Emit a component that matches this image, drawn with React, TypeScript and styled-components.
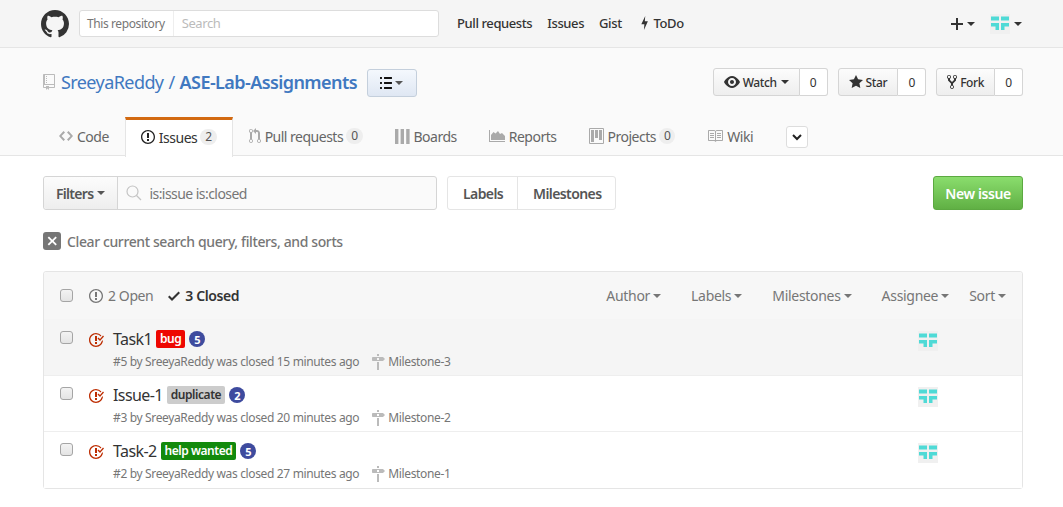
import styled, { createGlobalStyle } from 'styled-components'
import { ReactNode } from 'react'

const GlobalStyle = createGlobalStyle`
    html, body {
        margin: 0;
        padding: 0;
        background: #fff;
        font-family: "Noto Sans", "Open Sans", sans-serif;
        font-size: 14px;
        letter-spacing: -0.4px;
        color: #333;
    }
    * { box-sizing: border-box; }
`

const paths = {
    github: 'M8 0C3.58 0 0 3.58 0 8c0 3.54 2.29 6.53 5.47 7.59.4.07.55-.17.55-.38 0-.19-.01-.82-.01-1.49-2.01.37-2.53-.49-2.69-.94-.09-.23-.48-.94-.82-1.13-.28-.15-.68-.52-.01-.53.63-.01 1.08.58 1.23.82.72 1.21 1.87.87 2.33.66.07-.52.28-.87.51-1.07-1.78-.2-3.64-.89-3.64-3.95 0-.87.31-1.59.82-2.15-.08-.2-.36-1.02.08-2.12 0 0 .67-.21 2.2.82.64-.18 1.32-.27 2-.27.68 0 1.36.09 2 .27 1.53-1.04 2.2-.82 2.2-.82.44 1.1.16 1.92.08 2.12.51.56.82 1.27.82 2.15 0 3.07-1.87 3.75-3.65 3.95.29.25.54.73.54 1.48 0 1.07-.01 1.93-.01 2.2 0 .21.15.46.55.38A8.013 8.013 0 0016 8c0-4.42-3.58-8-8-8z',
    repo: 'M4 9H3V8h1v1zm0-3H3v1h1V6zm0-2H3v1h1V4zm0-2H3v1h1V2zm8-1v12c0 .55-.45 1-1 1H6v2l-1.5-1.5L3 16v-2H1c-.55 0-1-.45-1-1V1c0-.55.45-1 1-1h10c.55 0 1 .45 1 1zm-1 10H1v2h2v-1h3v1h5v-2zm0-10H2v9h9V1z',
    code: 'M9.5 3L8 4.5 11.5 8 8 11.5 9.5 13 14 8 9.5 3zm-5 0L0 8l4.5 5L6 11.5 2.5 8 6 4.5 4.5 3z',
    issue: 'M7 2.3c3.14 0 5.7 2.56 5.7 5.7s-2.56 5.7-5.7 5.7A5.71 5.71 0 0 1 1.3 8c0-3.14 2.56-5.7 5.7-5.7zM7 1C3.14 1 0 4.14 0 8s3.14 7 7 7 7-3.14 7-7-3.14-7-7-7zm1 3H6v5h2V4zm0 6H6v2h2v-2z',
    pull: 'M11 11.28V5c-.03-.78-.34-1.47-.94-2.06C9.46 2.35 8.78 2.03 8 2H7V0L4 3l3 3V4h1c.27.02.48.11.69.31.21.2.3.42.31.69v6.28A1.993 1.993 0 0 0 10 15a1.993 1.993 0 0 0 1-3.72zm-1 2.92c-.66 0-1.2-.55-1.2-1.2 0-.65.55-1.2 1.2-1.2.65 0 1.2.55 1.2 1.2 0 .65-.55 1.2-1.2 1.2zM4 3c0-1.11-.89-2-2-2a1.993 1.993 0 0 0-1 3.72v6.56A1.993 1.993 0 0 0 2 15a1.993 1.993 0 0 0 1-3.72V4.72c.59-.34 1-.98 1-1.72zm-.8 10c0 .66-.55 1.2-1.2 1.2-.65 0-1.2-.55-1.2-1.2 0-.65.55-1.2 1.2-1.2.65 0 1.2.55 1.2 1.2zM2 4.2C1.34 4.2.8 3.65.8 3c0-.65.55-1.2 1.2-1.2.65 0 1.2.55 1.2 1.2 0 .65-.55 1.2-1.2 1.2z',
    boards: 'M0 1h3.4v15H0V1zm5.6 0H9v15H5.6V1zm5.600 0h3.4v15h-3.4V1z',
    reports: 'M0 2h1v11h15v1H0V2zm2 10V7l2.5-3 2 1.5L9 3l2 3 2-1 3 3v4H2z',
    project: 'M10 12h3V2h-3v10zm-4-2h3V2H6v8zm-4 4h3V2H2v12zm-1 1h13V1H1v14zM14 0H1a1 1 0 0 0-1 1v14a1 1 0 0 0 1 1h13a1 1 0 0 0 1-1V1a1 1 0 0 0-1-1z',
    book: 'M3 5h4v1H3V5zm0 3h4V7H3v1zm0 2h4V9H3v1zm11-5h-4v1h4V5zm0 2h-4v1h4V7zm0 2h-4v1h4V9zm2-6v9c0 .55-.45 1-1 1H9.5l-1 1-1-1H2c-.55 0-1-.45-1-1V3c0-.55.45-1 1-1h5.5l1 1 1-1H15c.55 0 1 .45 1 1zm-8 .5L7.5 3H2v9h6V3.5zm7-.5H9.5l-.5.5V12h6V3z',
    eye: 'M8.06 2C3 2 0 8 0 8s3 6 8.06 6C13 14 16 8 16 8s-3-6-7.94-6zM8 12c-2.2 0-4-1.78-4-4 0-2.2 1.8-4 4-4 2.22 0 4 1.8 4 4 0 2.22-1.78 4-4 4zm2-4c0 1.11-.89 2-2 2-1.11 0-2-.89-2-2 0-1.11.89-2 2-2 1.11 0 2 .89 2 2z',
    star: 'M14 6l-4.9-.64L7 1 4.9 5.36 0 6l3.6 3.26L2.67 14 7 11.67 11.33 14l-.93-4.74L14 6z',
    fork: 'M8 1a1.993 1.993 0 0 0-1 3.72V6L5 8 3 6V4.72A1.993 1.993 0 0 0 2 1a1.993 1.993 0 0 0-1 3.72V6.5l3 3v1.78A1.993 1.993 0 0 0 5 15a1.993 1.993 0 0 0 1-3.72V9.5l3-3V4.72A1.993 1.993 0 0 0 8 1zM2 4.2C1.34 4.2.8 3.65.8 3c0-.65.55-1.2 1.2-1.2.65 0 1.2.55 1.2 1.2 0 .65-.55 1.2-1.2 1.2zm3 10c-.66 0-1.2-.55-1.2-1.2 0-.65.55-1.2 1.2-1.2.65 0 1.2.55 1.2 1.2 0 .65-.55 1.2-1.2 1.2zm3-10c-.66 0-1.2-.55-1.2-1.2 0-.65.55-1.2 1.2-1.2.65 0 1.2.55 1.2 1.2 0 .65-.55 1.2-1.2 1.2z',
    closed: 'M7 10h2v2H7v-2zm2-6H7v5h2V4zm1.5 1.5l-1 1L12 9l4-4.5-1-1L12 7l-1.5-1.5zM8 13.7A5.71 5.71 0 0 1 2.3 8c0-3.14 2.56-5.7 5.7-5.7 1.83 0 3.45.88 4.5 2.2l.92-.92A6.947 6.947 0 0 0 8 1C4.14 1 1 4.14 1 8s3.14 7 7 7 7-3.14 7-7l-1.52 1.52c-.66 2.41-2.86 4.19-5.48 4.19v-.01z',
    milestone: 'M8 2H6V0h2v2zm4 5H2c-.55 0-1-.45-1-1V4c0-.55.45-1 1-1h10l2 2-2 2zM8 4H6v2h2V4zM6 16h2V8H6v8z',
    check: 'M12 5l-8 8-4-4 1.5-1.5L4 10l6.5-6.5L12 5z',
    x: 'M7.48 8l3.75 3.75-1.48 1.48L6 9.48l-3.75 3.75-1.48-1.48L4.52 8 .77 4.25l1.48-1.48L6 6.52l3.75-3.75 1.48 1.48L7.48 8z',
    list: 'M2 13c0 .59 0 1-.59 1H.59C0 14 0 13.59 0 13c0-.59 0-1 .59-1h.81c.59 0 .59.41.59 1H2zm2.59-9h6.81c.59 0 .59-.41.59-1 0-.59 0-1-.59-1H4.59C4 2 4 2.41 4 3c0 .59 0 1 .59 1zM1.41 7H.59C0 7 0 7.41 0 8c0 .59 0 1 .59 1h.81c.59 0 .59-.41.59-1 0-.59 0-1-.59-1h.01zm0-5H.59C0 2 0 2.41 0 3c0 .59 0 1 .59 1h.81c.59 0 .59-.41.59-1 0-.59 0-1-.59-1h.01zm10 5H4.59C4 7 4 7.41 4 8c0 .59 0 1 .59 1h6.81c.59 0 .59-.41.59-1 0-.59 0-1-.59-1h.01zm0 5H4.59C4 12 4 12.41 4 13c0 .59 0 1 .59 1h6.81c.59 0 .59-.41.59-1 0-.59 0-1-.59-1h.01z',
    plus: 'M12 9H7v5H5V9H0V7h5V2h2v5h5v2z',
    bolt: 'M6 0L5.500 6H9L4.500 16 5 9.500H1.500L6 0z',
}

type IconName = keyof typeof paths

const widths: Partial<Record<IconName, number>> = {
    repo: 12, code: 14, issue: 14, pull: 12, boards: 15, project: 15, star: 14,
    fork: 10, milestone: 14, check: 12, x: 12, list: 12, plus: 12, bolt: 10,
}

const Svg = styled.svg<{ $color: string }>`
    flex: none;
    display: block;
    fill: ${({ $color }) => $color};
`

function Icon({ name, color = '#767676', size = 16 }: { name: IconName, color?: string, size?: number }) {
    const w = widths[name] ?? 16
    return (
        <Svg $color={color} width={(w * size) / 16} height={size} viewBox={`0 0 ${w} 16`}>
            <path fillRule="evenodd" d={paths[name]} />
        </Svg>
    )
}

const IdenticonSvg = styled.svg`
    flex: none;
    display: block;
`

function Identicon({ size }: { size: number }) {
    return (
        <IdenticonSvg width={size} height={size} viewBox="0 0 20 20">
            <rect width="20" height="20" fill="#f0f0f0" />
            <path fill="#4fdad6" d="M1 2.500h8v4H1zM11 2.500h8v4h-8zM1 9h8v7H5.500v-3.500H1zM11 9h8v3.500h-4.500V16H11z" />
        </IdenticonSvg>
    )
}

const Caret = styled.span<{ $color?: string; $gap?: number }>`
    display: inline-block;
    flex: none;
    width: 0;
    height: 0;
    margin-left: ${({ $gap }) => $gap ?? 3}px;
    border-style: solid;
    border-width: 4px 4px 0;
    border-color: ${({ $color }) => $color ?? '#555'} transparent transparent;
`

const Header = styled.header`
    height: 48px;
    background: #f5f5f5;
    border-bottom: 1px solid #e5e5e5;
`
const HeaderInner = styled.div`
    display: flex;
    align-items: center;
    height: 47px;
    padding: 0 41px;
`
const SearchBox = styled.div`
    display: flex;
    align-items: center;
    width: 360px;
    height: 27px;
    margin-left: 10px;
    background: #fff;
    border: 1px solid #ddd;
    border-radius: 3px;
    font-size: 12px;
`
const SearchScope = styled.div`
    height: 100%;
    display: flex;
    align-items: center;
    padding: 0 8px 1px 7px;
    color: #767676;
    border-right: 1px solid #eee;
`
const SearchHint = styled.div`
    padding: 0 0 1px 8px;
    font-size: 13px;
    color: #bbb;
`
const HeaderNav = styled.nav`
    display: flex;
    align-items: center;
    margin-left: 18px;
    padding-bottom: 1px;
    gap: 15px;
    flex: 1;
    font-size: 13px;
    letter-spacing: -0.4px;
    color: #333;
    font-weight: 500;
`
const TodoLink = styled.span`
    display: flex;
    align-items: center;
    gap: 5px;
    margin-left: 3px;
`
const HeaderActions = styled.div`
    display: flex;
    align-items: center;
    gap: 15px;
`
const ActionGroup = styled.div`
    display: flex;
    align-items: center;
`

const RepoHead = styled.div`
    height: 108px;
    background: #fafafa;
    border-bottom: 1px solid #e5e5e5;
    padding: 20px 40px 0 43px;
`
const RepoRow = styled.div`
    display: flex;
    align-items: center;
    height: 28px;
`
const RepoTitle = styled.h1`
    display: flex;
    align-items: center;
    margin: 0;
    font-size: 18px;
    font-weight: 400;
    letter-spacing: -0.58px;
    color: #4078c0;
`
const RepoIcon = styled.span`
    margin-right: 6px;
`
const Slash = styled.span`
    margin: 0 5px;
    color: #4078c0;
`
const RepoName = styled.span`
    font-weight: 600;
`
const ListButton = styled.div`
    display: flex;
    align-items: center;
    justify-content: center;
    width: 50px;
    height: 28px;
    margin: 2px 0 0 10px;
    background: linear-gradient(#f4f8fd, #dfe7f3);
    border: 1px solid #c4cfdc;
    border-radius: 3px;
`
const PageActions = styled.div`
    display: flex;
    gap: 10px;
    margin-left: auto;
`
const ActionItem = styled.div`
    display: flex;
    height: 28px;
    font-size: 12px;
`
const ActionButton = styled.div`
    display: flex;
    align-items: center;
    gap: 3px;
    padding: 0 10px;
    font-weight: 500;
    background: linear-gradient(#fcfcfc, #eee);
    border: 1px solid #d5d5d5;
    border-radius: 3px 0 0 3px;
`
const SocialCount = styled.div`
    display: flex;
    align-items: center;
    justify-content: center;
    width: 28px;
    background: #fff;
    border: 1px solid #d5d5d5;
    border-left: 0;
    border-radius: 0 3px 3px 0;
`

const Tabs = styled.nav`
    display: flex;
    align-items: flex-end;
    height: 40px;
    margin-top: 20px;
    letter-spacing: -0.5px;
`
const TabItem = styled.div<{ $selected?: boolean }>`
    display: flex;
    align-items: center;
    gap: 4px;
    height: ${({ $selected }) => ($selected ? '40px' : '37px')};
    padding: ${({ $selected }) => ($selected ? '0 15px 3px' : '0 16px 3px')};
    margin-bottom: ${({ $selected }) => ($selected ? '-1px' : '0')};
    color: ${({ $selected }) => ($selected ? '#333' : '#666')};
    background: ${({ $selected }) => ($selected ? '#fff' : 'transparent')};
    border: ${({ $selected }) => ($selected ? '1px solid #e5e5e5' : '0')};
    border-bottom: 0;
    border-top: ${({ $selected }) => ($selected ? '3px solid #d26911' : '0')};
`
const Counter = styled.span`
    display: inline-block;
    min-width: 16px;
    margin-left: -1px;
    padding: 2px 5px;
    font-size: 12px;
    line-height: 1;
    text-align: center;
    color: #555;
    background: #eee;
    border-radius: 20px;
`
const ExpandTab = styled.div`
    display: flex;
    align-items: center;
    justify-content: center;
    width: 22px;
    height: 22px;
    margin: 0 0 8px 17px;
    background: #fff;
    border: 1px solid #ddd;
    border-radius: 3px;
`

const Main = styled.main`
    padding: 20px 40px 0 43px;
`
const SubNav = styled.div`
    display: flex;
    align-items: center;
    height: 34px;
`
const FilterGroup = styled.div`
    display: flex;
    width: 394px;
    height: 34px;
    border: 1px solid #d5d5d5;
    border-radius: 3px;
    background: #fafafa;
`
const FilterButton = styled.div`
    display: flex;
    align-items: center;
    padding: 0 12px;
    font-weight: 600;
    letter-spacing: -0.7px;
    color: #555;
    background: linear-gradient(#fcfcfc, #eee);
    border-right: 1px solid #d5d5d5;
    border-radius: 3px 0 0 3px;
`
const FilterInput = styled.div`
    display: flex;
    align-items: center;
    gap: 7px;
    padding-left: 8px;
    letter-spacing: -0.55px;
    color: #767676;
`
const SearchGlyph = styled.svg`
    flex: none;
    fill: none;
    stroke: #c4c4c4;
    stroke-width: 1.2;
`
const LinkGroup = styled.div`
    display: flex;
    height: 34px;
    margin-left: 10px;
    border: 1px solid #e5e5e5;
    border-radius: 3px;
`
const NavLink = styled.div`
    display: flex;
    align-items: center;
    padding: 0 14px 0 15px;
    font-weight: 600;
    letter-spacing: -0.6px;
    color: #555;
    & + & {
        border-left: 1px solid #e5e5e5;
    }
`
const NewIssue = styled.div`
    display: flex;
    align-items: center;
    justify-content: center;
    width: 90px;
    height: 34px;
    margin-left: auto;
    font-weight: 600;
    color: #fff;
    background: linear-gradient(#8add6d, #60b044);
    border: 1px solid #5ca941;
    border-radius: 3px;
`
const ClearQuery = styled.div`
    display: flex;
    align-items: center;
    gap: 6px;
    height: 18px;
    margin-top: 22px;
    font-weight: 500;
    letter-spacing: -0.385px;
    color: #767676;
`
const ClearBox = styled.span`
    display: flex;
    align-items: center;
    justify-content: center;
    width: 18px;
    height: 18px;
    background: #767676;
    border-radius: 3px;
`
const IssueBox = styled.div`
    margin-top: 21px;
    border: 1px solid #e5e5e5;
    border-radius: 3px;
`
const BoxHeader = styled.div`
    display: flex;
    align-items: center;
    height: 47px;
    padding: 0 16px;
    background: #f7f7f7;
    border-radius: 3px 3px 0 0;
`
const Check = styled.span`
    flex: none;
    display: block;
    width: 13px;
    height: 13px;
    background: linear-gradient(#f3f3f3, #e4e4e4);
    border: 1px solid #a5a5a5;
    border-radius: 3px;
`
const States = styled.div`
    display: flex;
    align-items: center;
    gap: 15px;
    margin-left: 16px;
    flex: 1;
`
const StateLink = styled.span<{ $active?: boolean }>`
    display: flex;
    align-items: center;
    gap: 5px;
    color: ${({ $active }) => ($active ? '#333' : '#767676')};
    font-weight: ${({ $active }) => ($active ? 600 : 400)};
`
const Filters = styled.div`
    display: flex;
    align-items: center;
    letter-spacing: -0.3px;
    color: #767676;
`
const FilterItem = styled.span<{ $gap: number }>`
    display: flex;
    align-items: center;
    margin-left: ${({ $gap }) => $gap}px;
`
const Row = styled.div<{ $shaded?: boolean; $last?: boolean }>`
    display: flex;
    height: ${({ $last }) => ($last ? '57px' : '56px')};
    padding: 11px 16px 0;
    background: ${({ $shaded }) => ($shaded ? '#f5f5f5' : '#fff')};
    border-top: 1px solid ${({ $shaded }) => ($shaded ? '#f5f5f5' : '#eee')};
`
const ClosedIcon = styled.div`
    margin: 1px 0 0 15px;
`
const RowBody = styled.div`
    margin: -2px 0 0 9px;
    flex: 1;
`
const TitleLine = styled.div`
    display: flex;
    align-items: center;
    gap: 4px;
    height: 20px;
`
const IssueTitle = styled.span`
    font-size: 16px;
    letter-spacing: -0.6px;
    color: #333;
`
const Label = styled.span<{ $bg: string; $fg: string }>`
    padding: 0 4px;
    height: 18px;
    line-height: 18px;
    font-size: 12px;
    font-weight: 600;
    letter-spacing: -0.45px;
    color: ${({ $fg }) => $fg};
    background: ${({ $bg }) => $bg};
    border-radius: 2px;
`
const Estimate = styled.span`
    display: flex;
    align-items: center;
    justify-content: center;
    width: 16px;
    height: 16px;
    font-size: 11px;
    font-weight: 700;
    color: #fff;
    background: #3e4b9e;
    border-radius: 50%;
`
const MetaLine = styled.div`
    display: flex;
    align-items: center;
    margin-top: 4px;
    font-size: 12px;
    letter-spacing: -0.35px;
    color: #767676;
`
const Milestone = styled.span`
    display: flex;
    align-items: center;
    gap: 3px;
    margin-left: 12px;
`
const Assignee = styled.div`
    margin-right: 68px;
`

type Issue = {
    title: string
    label: string
    labelBg: string
    labelFg: string
    estimate: number
    num: number
    ago: string
    milestone: string
}

const issues: Issue[] = [
    { title: 'Task1', label: 'bug', labelBg: '#ee0701', labelFg: '#fff', estimate: 5, num: 5, ago: '15 minutes ago', milestone: 'Milestone-3' },
    { title: 'Issue-1', label: 'duplicate', labelBg: '#cccccc', labelFg: '#333', estimate: 2, num: 3, ago: '20 minutes ago', milestone: 'Milestone-2' },
    { title: 'Task-2', label: 'help wanted', labelBg: '#128a0c', labelFg: '#fff', estimate: 5, num: 2, ago: '27 minutes ago', milestone: 'Milestone-1' },
]

const tabs: { name: IconName; text: string; count?: number; selected?: boolean }[] = [
    { name: 'code', text: 'Code' },
    { name: 'issue', text: 'Issues', count: 2, selected: true },
    { name: 'pull', text: 'Pull requests', count: 0 },
    { name: 'boards', text: 'Boards' },
    { name: 'reports', text: 'Reports' },
    { name: 'project', text: 'Projects', count: 0 },
    { name: 'book', text: 'Wiki' },
]

function RepoAction({ children }: { children: ReactNode }) {
    return (
        <ActionItem>
            <ActionButton>{children}</ActionButton>
            <SocialCount>0</SocialCount>
        </ActionItem>
    )
}

export default function App() {
    return (
        <>
            <GlobalStyle />
            <Header>
                <HeaderInner>
                    <Icon name="github" color="#333" size={28} />
                    <SearchBox>
                        <SearchScope>This repository</SearchScope>
                        <SearchHint>Search</SearchHint>
                    </SearchBox>
                    <HeaderNav>
                        <span>Pull requests</span>
                        <span>Issues</span>
                        <span>Gist</span>
                        <TodoLink><Icon name="bolt" color="#333" size={14} />ToDo</TodoLink>
                    </HeaderNav>
                    <HeaderActions>
                        <ActionGroup>
                            <Icon name="plus" color="#333" size={16} />
                            <Caret $color="#333" $gap={4} />
                        </ActionGroup>
                        <ActionGroup>
                            <Identicon size={20} />
                            <Caret $color="#333" $gap={4} />
                        </ActionGroup>
                    </HeaderActions>
                </HeaderInner>
            </Header>
            <RepoHead>
                <RepoRow>
                    <RepoTitle>
                        <RepoIcon><Icon name="repo" color="#bbb" size={16} /></RepoIcon>
                        <span>SreeyaReddy</span>
                        <Slash>/</Slash>
                        <RepoName>ASE-Lab-Assignments</RepoName>
                    </RepoTitle>
                    <ListButton>
                        <Icon name="list" color="#111" size={16} />
                        <Caret />
                    </ListButton>
                    <PageActions>
                        <RepoAction><Icon name="eye" color="#333" />Watch<Caret $color="#333" $gap={1} /></RepoAction>
                        <RepoAction><Icon name="star" color="#333" />Star</RepoAction>
                        <RepoAction><Icon name="fork" color="#333" />Fork</RepoAction>
                    </PageActions>
                </RepoRow>
                <Tabs>
                    {tabs.map(tab => (
                        <TabItem key={tab.text} $selected={tab.selected}>
                            <Icon name={tab.name} color={tab.selected ? '#222' : '#aaa'} />
                            <span>{tab.text}</span>
                            {tab.count !== undefined && <Counter>{tab.count}</Counter>}
                        </TabItem>
                    ))}
                    <ExpandTab>
                        <svg width="10" height="7" viewBox="0 0 10 7" fill="none" stroke="#222" strokeWidth="2"><path d="M1 1l4 4 4-4" /></svg>
                    </ExpandTab>
                </Tabs>
            </RepoHead>
            <Main>
                <SubNav>
                    <FilterGroup>
                        <FilterButton>Filters<Caret $gap={4} /></FilterButton>
                        <FilterInput>
                            <SearchGlyph width="16" height="16" viewBox="0 0 16 16">
                                <circle cx="6.500" cy="6.500" r="5.500" />
                                <path d="M10.500 10.500L15 15" />
                            </SearchGlyph>
                            is:issue is:closed
                        </FilterInput>
                    </FilterGroup>
                    <LinkGroup>
                        <NavLink>Labels</NavLink>
                        <NavLink>Milestones</NavLink>
                    </LinkGroup>
                    <NewIssue>New issue</NewIssue>
                </SubNav>
                <ClearQuery>
                    <ClearBox><Icon name="x" color="#fff" size={14} /></ClearBox>
                    Clear current search query, filters, and sorts
                </ClearQuery>
                <IssueBox>
                    <BoxHeader>
                        <Check />
                        <States>
                            <StateLink><Icon name="issue" color="#767676" />2 Open</StateLink>
                            <StateLink $active><Icon name="check" color="#333" />3 Closed</StateLink>
                        </States>
                        <Filters>
                            <FilterItem $gap={0}>Author<Caret $color="#767676" /></FilterItem>
                            <FilterItem $gap={30}>Labels<Caret $color="#767676" /></FilterItem>
                            <FilterItem $gap={30}>Milestones<Caret $color="#767676" /></FilterItem>
                            <FilterItem $gap={30}>Assignee<Caret $color="#767676" /></FilterItem>
                            <FilterItem $gap={20}>Sort<Caret $color="#767676" /></FilterItem>
                        </Filters>
                    </BoxHeader>
                    {issues.map((issue, i) => (
                        <Row key={issue.num} $shaded={i === 0} $last={i === issues.length - 1}>
                            <Check />
                            <ClosedIcon><Icon name="closed" color="#bd2c00" /></ClosedIcon>
                            <RowBody>
                                <TitleLine>
                                    <IssueTitle>{issue.title}</IssueTitle>
                                    <Label $bg={issue.labelBg} $fg={issue.labelFg}>{issue.label}</Label>
                                    <Estimate>{issue.estimate}</Estimate>
                                </TitleLine>
                                <MetaLine>
                                    #{issue.num} by SreeyaReddy was closed {issue.ago}
                                    <Milestone><Icon name="milestone" color="#bbb" />{issue.milestone}</Milestone>
                                </MetaLine>
                            </RowBody>
                            <Assignee><Identicon size={20} /></Assignee>
                        </Row>
                    ))}
                </IssueBox>
            </Main>
        </>
    )
}
